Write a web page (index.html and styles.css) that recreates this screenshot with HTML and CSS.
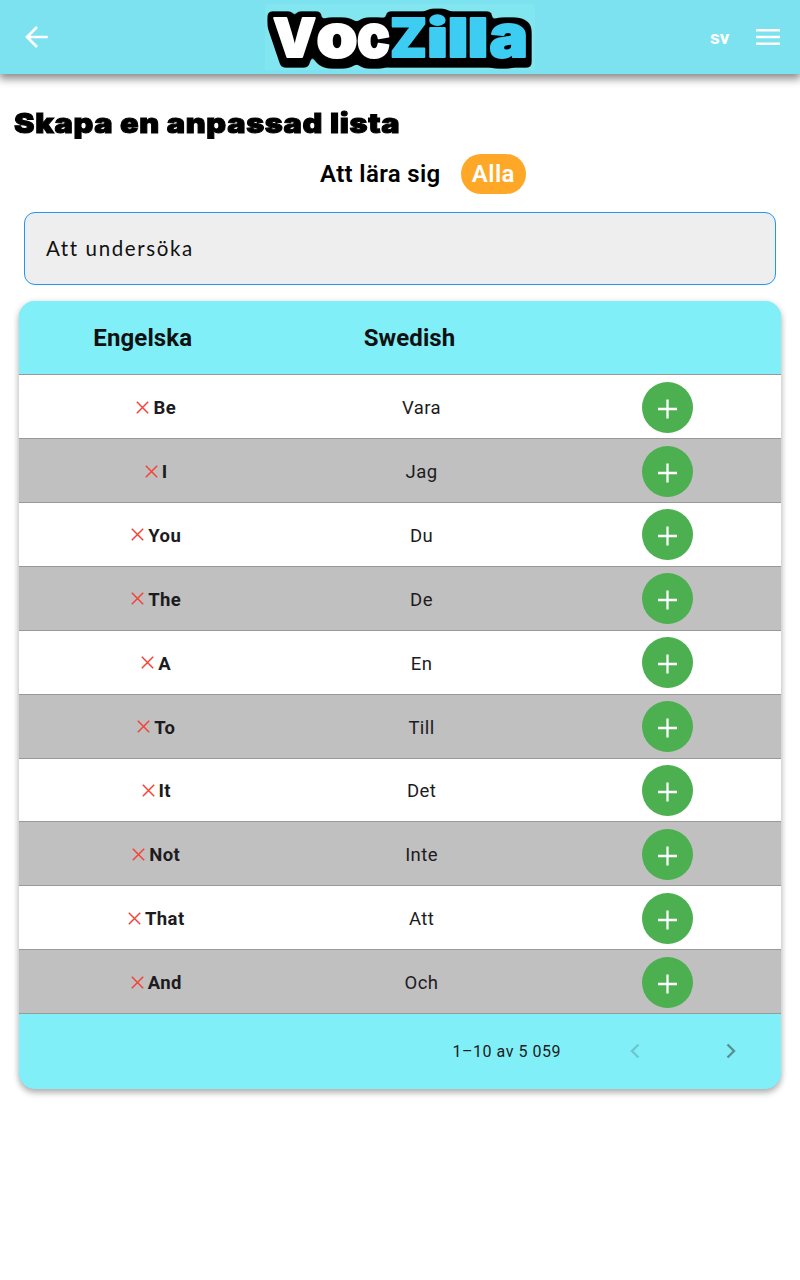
FILE: index.html
```html
<!DOCTYPE html>
<html lang="sv">
<head>
<meta charset="utf-8">
<title>VocZilla</title>
<link rel="stylesheet" href="styles.css">
</head>
<body>
<header class="bar">
  <svg class="back" viewBox="0 0 24 24"><path d="M12 4.500 4.500 12l7.500 7.500M4.500 12h15.500"/></svg>
  <svg class="logo" viewBox="0 0 270 66" role="img" aria-label="VocZilla">
    <defs>
      <filter id="outline" x="-20" y="-20" width="310" height="110" filterUnits="userSpaceOnUse" color-interpolation-filters="sRGB">
        <feMorphology in="SourceAlpha" operator="dilate" radius="5" result="fat"/>
        <feOffset in="fat" dy="0" result="up"/>
        <feOffset in="fat" dy="4" result="down"/>
        <feMerge result="both"><feMergeNode in="up"/><feMergeNode in="down"/></feMerge>
        <feGaussianBlur stdDeviation="2.2"/>
        <feComponentTransfer result="edge"><feFuncA type="linear" slope="6" intercept="-1.8"/></feComponentTransfer>
        <feMerge><feMergeNode in="edge"/><feMergeNode in="SourceGraphic"/></feMerge>
      </filter>
    </defs>
    <g filter="url(#outline)">
      <text y="52.5" x="8" class="voc cap" textLength="43" lengthAdjust="spacingAndGlyphs">V</text>
      <text y="52.5" x="51.500" class="voc" textLength="41" lengthAdjust="spacingAndGlyphs">o</text>
      <text y="52.5" x="92" class="voc" textLength="33" lengthAdjust="spacingAndGlyphs">c</text>
      <text y="52.5" x="125" class="zilla cap" textLength="37" lengthAdjust="spacingAndGlyphs">Z</text>
      <text y="52.5" x="162" class="zilla i" textLength="21" lengthAdjust="spacingAndGlyphs">i</text>
      <text y="52.5" x="182.500" class="zilla i" textLength="21" lengthAdjust="spacingAndGlyphs">l</text>
      <text y="52.5" x="202.500" class="zilla i" textLength="21" lengthAdjust="spacingAndGlyphs">l</text>
      <text y="52.5" x="224.500" class="zilla" textLength="38.500" lengthAdjust="spacingAndGlyphs">a</text>
    </g>
  </svg>
  <span class="lang">sv</span>
  <svg class="menu" viewBox="0 0 24 16"><path d="M0 1.300h24M0 8h24M0 14.700h24"/></svg>
</header>
<main>
  <h1>Skapa en anpassad lista</h1>
  <div class="filter"><span>Att lära sig</span><span class="pill">Alla</span></div>
  <div class="search">Att undersöka</div>
  <section class="card">
    <div class="row head"><span>Engelska</span><span>Swedish</span><span></span></div>
    <div id="rows"></div>
    <div class="foot">
      <span class="range">1–10 av 5 059</span>
      <svg class="chev off" viewBox="0 0 10 16"><path d="M8.500 1.500 2 8l6.500 6.500"/></svg>
      <svg class="chev" viewBox="0 0 10 16"><path d="M1.500 1.500 8 8l-6.500 6.500"/></svg>
    </div>
  </section>
</main>
<script src="app.js"></script>
</body>
</html>
```
FILE: styles.css
```css
* { box-sizing: border-box; }
body { margin: 0; min-height: 100vh; background: #fff; color: #1d1b20; font-family: Roboto, sans-serif; }
.bar { height: 74px; display: flex; align-items: center; background: #7de2ef; box-shadow: 0 4px 8px 1px rgba(0,0,0,.45); }
svg { fill: none; display: block; flex: none; }
.back { width: 32px; height: 32px; margin: 0 0 0 21px; stroke: #fff; stroke-width: 2; }
.logo { width: 270px; height: 66px; margin-left: 212px; background: #82e6f0; overflow: visible; }
.logo text { font-family: Inter, sans-serif; font-weight: 900; font-size: 60px; stroke-width: 2; stroke-linejoin: round; }
.logo .cap { font-size: 54px; }
.logo .i { font-size: 54px; }
.voc { fill: #fff; stroke: #fff; }
.zilla { fill: #3dcdf2; stroke: #3dcdf2; }
.lang { margin-left: 175px; width: 20px; color: #fff; font-size: 19px; font-weight: 700; letter-spacing: .1px; }
.menu { width: 24px; height: 16px; margin-left: 26px; stroke: #fff; stroke-width: 2.500; }
h1 { width: max-content; margin: 30.500px 0 0 14px; height: 36px; line-height: 36px; font-family: Inter, sans-serif; font-weight: 900; font-size: 27.500px; letter-spacing: .6px; color: #000; -webkit-text-stroke: 1px #000; white-space: nowrap; transform: scaleX(1.117); transform-origin: left; }
.filter { display: flex; align-items: center; height: 40px; margin: 13.500px 0 0 320px; gap: 21px; font-size: 24px; font-weight: 600; letter-spacing: .35px; color: #000; white-space: nowrap; }
.pill { height: 40px; line-height: 40.500px; width: 65px; margin-left: -.7px; text-align: center; border-radius: 20px; background: #ffa726; color: #fff; font-weight: 600; letter-spacing: .4px; }
.search { margin: 17.500px 24px 0; height: 73.500px; line-height: 71px; padding-left: 21px; border: 1.300px solid #2196f3; border-radius: 11px; background: #eee; color: #111; font-family: Lato, sans-serif; font-size: 20.500px; letter-spacing: 1.600px; }
.card { margin: 16px 19px 0; border-radius: 16px; overflow: hidden; background: #80eff7; box-shadow: 0 4px 6px rgba(0,0,0,.25), 0 1px 7px rgba(0,0,0,.12); }
main { padding-bottom: 20px; }
.row { height: 63.890px; padding-top: 2px; display: grid; grid-template-columns: 274.500px 256px 1fr; align-items: center; text-align: center; border-bottom: 1px solid #999; background: #fff; font-size: 18.500px; letter-spacing: .4px; }
.row > span { position: relative; top: .5px; }
.row:nth-child(even) { background: #c0c0c0; }
.row.head { height: 74.300px; padding-top: 0; background: #80eff7; font-size: 24px; font-weight: 700; letter-spacing: .1px; color: #111; }
.head span { padding-right: 27px; }
.head span:nth-child(2) { padding-right: 24px; }
.word { display: flex; align-items: center; justify-content: center; gap: 4px; font-weight: 700; }
.cross { width: 13px; height: 13px; margin-bottom: 2px; stroke: #f44336; stroke-width: 1.500; }
.add { width: 51px; height: 51px; margin: -1px 0 0 4.500px; border-radius: 50%; background: #4caf50; justify-self: center; stroke: #fff; stroke-width: 2.300; }
.foot { height: 74.800px; display: flex; align-items: center; padding: 0 45px 0 0; justify-content: flex-end; }
.range { font-size: 16px; letter-spacing: .53px; margin-right: 69px; }
.chev { width: 10px; height: 16px; stroke: #588f94; stroke-width: 2.400; }
.chev.off { stroke: #6cc7cf; margin-right: 86px; }
```
FILE: app.js
```js
const words = [["Be","Vara"],["I","Jag"],["You","Du"],["The","De"],["A","En"],["To","Till"],["It","Det"],["Not","Inte"],["That","Att"],["And","Och"]];
document.getElementById("rows").innerHTML = words.map(([en, sv]) => `
  <div class="row">
    <span class="word"><svg class="cross" viewBox="0 0 13 13"><path d="M.8.8l11.400 11.400M12.200.8.8 12.200"/></svg>${en}</span>
    <span>${sv}</span>
    <svg class="add" viewBox="0 0 51 51"><path d="M16 27h19M25.500 17.500v19"/></svg>
  </div>`).join("");
```
